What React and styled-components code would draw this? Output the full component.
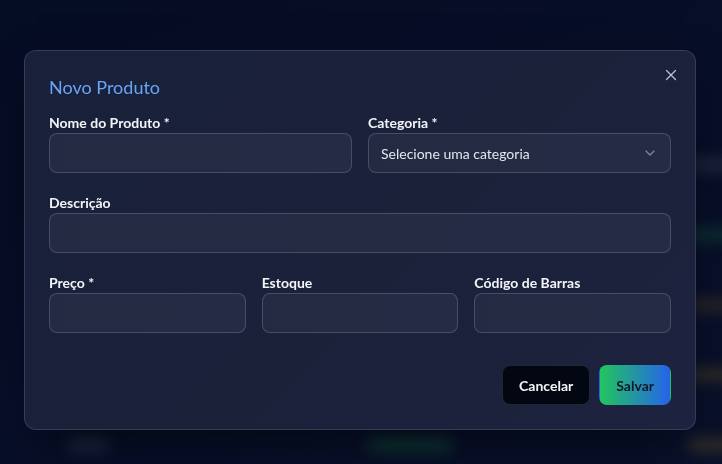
import React from 'react';
import styled, { createGlobalStyle } from 'styled-components';
import { X, ChevronDown } from 'lucide-react';

const GlobalStyle = createGlobalStyle`
  * { box-sizing: border-box; }
  html, body { margin: 0; padding: 0; background: #0a1229; }
  body {
    font-family: Lato, "Liberation Sans", sans-serif;
    -webkit-font-smoothing: antialiased;
  }
`;

const Page = styled.div`
  width: 722px;
  height: 464px;
  overflow: hidden;
  background: linear-gradient(160deg, #07102a 0%, #0a1330 55%, #0d1634 100%);
`;

const Table = styled.div`
  display: flex;
  flex-direction: column;
  padding: 158px 0 0 68px;
  filter: blur(7px);
`;

const TableRow = styled.div`
  display: grid;
  grid-template-columns: 300px 320px 1fr;
  height: 70px;
  align-items: start;
`;

const Cell = styled.div`
  height: 14px;
  width: ${(p) => p.$w}px;
  border-radius: 4px;
  background: ${(p) => p.$c};
`;

const Overlay = styled.div`
  position: fixed;
  inset: 0;
  display: flex;
  justify-content: center;
  align-items: flex-start;
  padding: 50px 2px 0 0;
  background: rgba(2, 6, 23, 0.3);
`;

const Dialog = styled.div`
  position: relative;
  width: 672px;
  padding: 24px;
  border-radius: 12px;
  border: 1px solid rgba(148, 163, 184, 0.22);
  background: linear-gradient(135deg, #19203a 0%, #1b2139 55%, #1d223f 100%);
  box-shadow: 0 25px 50px -12px rgba(0, 0, 0, 0.5);
`;

const Title = styled.h2`
  margin: 0 0 14px;
  font-size: 18px;
  line-height: 24px;
  font-weight: 400;
  color: #68a4f7;
`;

const CloseButton = styled.button`
  position: absolute;
  top: 15px;
  right: 15px;
  width: 18px;
  height: 18px;
  padding: 0;
  border: none;
  background: transparent;
  color: #b8c2d2;
  display: flex;
  align-items: center;
  justify-content: center;
  cursor: pointer;
`;

const Form = styled.div`
  display: flex;
  flex-direction: column;
  gap: 20px;
`;

const Grid = styled.div`
  display: grid;
  grid-template-columns: repeat(${(p) => p.$cols}, 1fr);
  column-gap: 16px;
`;

const Field = styled.div`
  display: flex;
  flex-direction: column;
`;

const Label = styled.label`
  font-size: 14px;
  line-height: 20px;
  font-weight: 700;
  color: #f1f5f9;
`;

const fieldBox = `
  height: 40px;
  width: 100%;
  border-radius: 8px;
  border: 1px solid rgba(148, 163, 184, 0.3);
  background: linear-gradient(90deg, #232a41 0%, #252b44 100%);
  font-family: inherit;
  font-size: 14px;
  color: #e2e8f0;
`;

const Input = styled.input`
  ${fieldBox}
  padding: 0 12px;
  outline: none;
`;

const SelectTrigger = styled.div`
  ${fieldBox}
  display: flex;
  align-items: center;
  justify-content: space-between;
  padding: 0 12px;
  svg { color: #94a3b8; opacity: 0.8; }
`;

const Footer = styled.div`
  display: flex;
  justify-content: flex-end;
  gap: 9px;
  margin-top: 32px;
`;

const Button = styled.button`
  height: 40px;
  padding: 0 16px;
  border-radius: 8px;
  font-family: inherit;
  font-size: 14px;
  font-weight: 700;
  cursor: pointer;
  border: 1px solid ${(p) => (p.$primary ? 'transparent' : 'rgba(148,163,184,0.2)')};
  background: ${(p) =>
    p.$primary ? 'linear-gradient(90deg, #22c55e 0%, #2563eb 100%)' : '#030712'};
  color: ${(p) => (p.$primary ? '#0f172a' : '#f1f5f9')};
`;

const rows = [
  ['rgba(100,116,139,0.3)', 'rgba(100,116,139,0.25)', 'rgba(120,130,150,0.3)'],
  ['rgba(100,116,139,0.3)', 'rgba(34,197,94,0.25)', 'rgba(34,197,94,0.25)'],
  ['rgba(100,116,139,0.3)', 'rgba(34,197,94,0.25)', 'rgba(180,130,40,0.28)'],
  ['rgba(100,116,139,0.3)', 'rgba(34,197,94,0.25)', 'rgba(200,160,30,0.28)'],
  ['rgba(100,116,139,0.35)', 'rgba(34,197,94,0.3)', 'rgba(200,160,30,0.3)'],
];

export default function App() {
  return (
    <>
      <GlobalStyle />
      <Page>
        <Table>
          {rows.map((r, i) => (
            <TableRow key={i}>
              <Cell $w={40} $c={r[0]} />
              <Cell $w={84} $c={r[1]} />
              <Cell $w={70} $c={r[2]} />
            </TableRow>
          ))}
        </Table>
      </Page>
      <Overlay>
        <Dialog>
          <CloseButton aria-label="Fechar">
            <X size={18} strokeWidth={1.6} />
          </CloseButton>
          <Title>Novo Produto</Title>
          <Form>
            <Grid $cols={2}>
              <Field>
                <Label>Nome do Produto *</Label>
                <Input />
              </Field>
              <Field>
                <Label>Categoria *</Label>
                <SelectTrigger>
                  <span>Selecione uma categoria</span>
                  <ChevronDown size={16} strokeWidth={1.8} />
                </SelectTrigger>
              </Field>
            </Grid>
            <Field>
              <Label>Descrição</Label>
              <Input />
            </Field>
            <Grid $cols={3}>
              <Field>
                <Label>Preço *</Label>
                <Input />
              </Field>
              <Field>
                <Label>Estoque</Label>
                <Input />
              </Field>
              <Field>
                <Label>Código de Barras</Label>
                <Input />
              </Field>
            </Grid>
          </Form>
          <Footer>
            <Button>Cancelar</Button>
            <Button $primary>Salvar</Button>
          </Footer>
        </Dialog>
      </Overlay>
    </>
  );
}
